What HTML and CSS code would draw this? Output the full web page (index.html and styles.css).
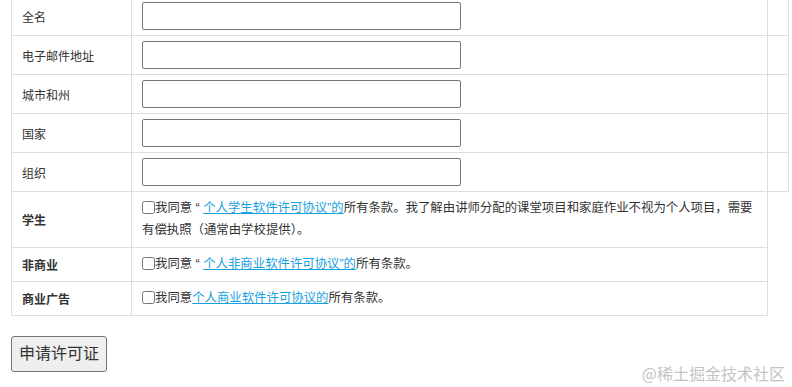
FILE: index.html
```html
<!DOCTYPE html>
<html lang="zh-CN">
<head>
<meta charset="UTF-8">
<meta name="viewport" content="width=device-width, initial-scale=1.0">
<title>申请许可证</title>
<link rel="stylesheet" href="styles.css">
</head>
<body>
<div class="page">
  <form class="license-form">
    <table class="license-table">
      <colgroup>
        <col class="col-label">
        <col class="col-field">
        <col class="col-extra">
      </colgroup>
      <tr>
        <td class="label">全名</td>
        <td class="field"><input type="text" class="text-input"></td>
        <td></td>
      </tr>
      <tr>
        <td class="label">电子邮件地址</td>
        <td class="field"><input type="text" class="text-input"></td>
        <td></td>
      </tr>
      <tr>
        <td class="label">城市和州</td>
        <td class="field"><input type="text" class="text-input"></td>
        <td></td>
      </tr>
      <tr>
        <td class="label">国家</td>
        <td class="field"><input type="text" class="text-input"></td>
        <td></td>
      </tr>
      <tr>
        <td class="label">组织</td>
        <td class="field"><input type="text" class="text-input"></td>
        <td></td>
      </tr>
      <tr>
        <th class="label strong">学生</th>
        <td class="agree"><input type="checkbox" class="check">我同意 “ <a href="#">个人学生软件许可协议”的</a>所有条款。我了解由讲师分配的课堂项目和家庭作业不视为个人项目，需要有偿执照（通常由学校提供）。</td>
      </tr>
      <tr>
        <th class="label strong">非商业</th>
        <td class="agree"><input type="checkbox" class="check">我同意 “ <a href="#">个人非商业软件许可协议”的</a>所有条款。</td>
      </tr>
      <tr>
        <th class="label strong">商业广告</th>
        <td class="agree"><input type="checkbox" class="check">我同意<a href="#">个人商业软件许可协议的</a>所有条款。</td>
      </tr>
    </table>
    <button type="button" class="submit-button">申请许可证</button>
  </form>
</div>
<div class="watermark">@稀土掘金技术社区</div>
</body>
</html>
```

FILE: styles.css
```css
body {
  margin: 0;
  font-family: "Liberation Sans", "Noto Sans CJK SC", sans-serif;
  color: #333;
  background: #fff;
}
.page {
  padding-left: 11px;
}
.license-table {
  border-collapse: collapse;
  width: 778px;
  margin-top: -4px;
}
.col-label { width: 120px; }
.col-field { width: 636px; }
.license-table td,
.license-table th {
  border: 1px solid #ddd;
  padding: 5px 10px;
}
.label {
  font-size: 12px;
  text-align: left;
  vertical-align: middle;
  font-weight: normal;
}
.label.strong {
  font-weight: bold;
}
.text-input {
  display: block;
  box-sizing: border-box;
  width: 319px;
  height: 28px;
  margin: 0;
  border: 1px solid #767676;
  border-radius: 2px;
}
.license-table .agree {
  font-size: 12.4px;
  line-height: 22px;
  vertical-align: top;
  padding-bottom: 6px;
}
.check {
  width: 13px;
  height: 13px;
  margin: 0;
  vertical-align: -2px;
}
.agree a {
  color: #1a9fe0;
  text-decoration: underline;
}
.submit-button {
  display: block;
  margin-top: 20px;
  padding: 6px 7px;
  font-family: "Liberation Sans", "Noto Sans CJK SC", sans-serif;
  font-size: 16px;
  line-height: 22px;
  color: #333;
  background: #efefef;
  border: 1px solid #767676;
  border-radius: 3px;
}
.watermark {
  position: absolute;
  right: 7px;
  top: 361px;
  font-family: "Noto Sans CJK SC", sans-serif;
  font-size: 16px;
  color: #c4c4c4;
}
```
